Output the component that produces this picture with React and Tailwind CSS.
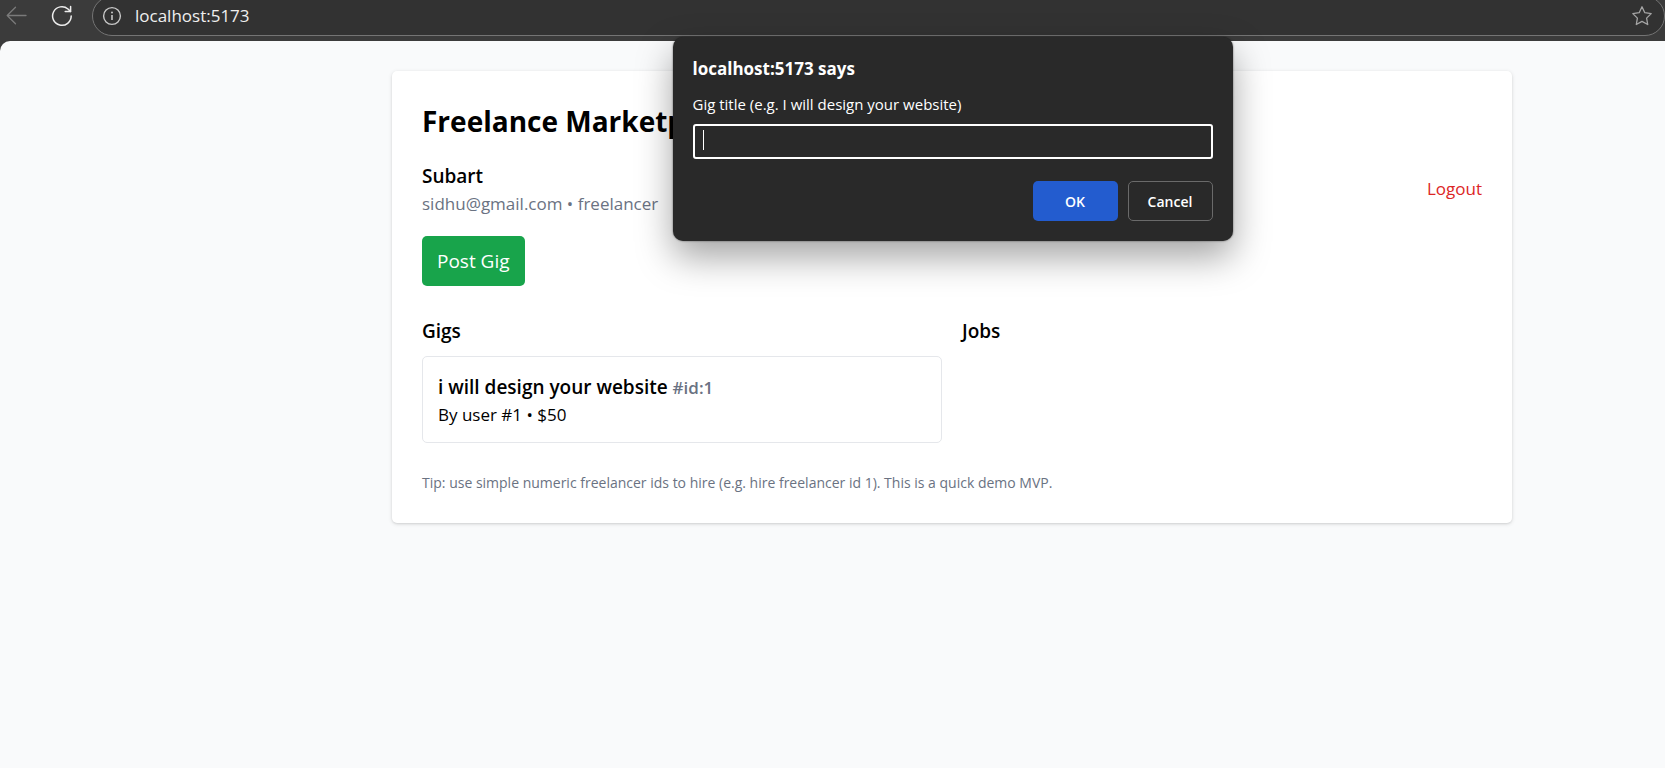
import { useState } from "react";

function BackIcon() {
  return (
    <svg width="22" height="20" viewBox="0 0 22 20" fill="none" stroke="currentColor" strokeWidth="1.3" strokeLinecap="round" strokeLinejoin="round">
      <path d="M20 10.5H1.2M9.5 2.2 1.2 10.5l8.3 8.3" />
    </svg>
  );
}

function ReloadIcon() {
  return (
    <svg width="22" height="22" viewBox="0 0 22 22" fill="none" stroke="currentColor" strokeWidth="1.5" strokeLinecap="round" strokeLinejoin="round">
      <path d="M20.2 11a9.3 9.3 0 1 1-3.2-7l2.4 2.4" />
      <path d="M19.6 1.4v5.2h-5.4" />
    </svg>
  );
}

function InfoIcon() {
  return (
    <svg width="20" height="20" viewBox="0 0 20 20" fill="none" stroke="currentColor" strokeWidth="1.4">
      <circle cx="10" cy="10" r="8.4" />
      <path d="M10 9v5" strokeWidth="1.6" />
      <circle cx="10" cy="6.4" r="1" fill="currentColor" stroke="none" />
    </svg>
  );
}

function StarIcon() {
  return (
    <svg width="22" height="22" viewBox="0 0 22 22" fill="none" stroke="currentColor" strokeWidth="1.3" strokeLinejoin="round">
      <path d="M11 1.8l2.8 5.9 6.4.9-4.6 4.5 1.1 6.4L11 16.4l-5.7 3.1 1.1-6.4L1.8 8.6l6.4-.9z" />
    </svg>
  );
}

function BrowserBar() {
  return (
    <header className="flex h-[41px] items-start bg-[#3b3b3b]">
      <button type="button" aria-label="Back" className="ml-1.5 mt-[5px] text-[#7a7a7a]">
        <BackIcon />
      </button>
      <button type="button" aria-label="Reload" className="ml-[23px] mt-[5px] text-[#ededed]">
        <ReloadIcon />
      </button>
      <div className="-mt-1 ml-[19px] flex h-10 flex-1 items-center rounded-full border border-[#747474] bg-[#323232] pl-[9px] pr-[11px]">
        <span className="text-[#c8c8c8]">
          <InfoIcon />
        </span>
        <input
          aria-label="Address"
          defaultValue="localhost:5173"
          className="ml-[13px] min-w-0 flex-1 bg-transparent text-[17px] leading-6 text-[#efefef] outline-none"
        />
        <button type="button" aria-label="Add to favorites" className="text-[#a5a5a5]">
          <StarIcon />
        </button>
      </div>
    </header>
  );
}

function PromptDialog() {
  const [title, setTitle] = useState("");
  return (
    <div className="pointer-events-none absolute inset-x-0 top-[37px] flex justify-center pl-60">
      <form
        role="dialog"
        aria-labelledby="prompt-origin"
        onSubmit={(e) => e.preventDefault()}
        className="pointer-events-auto w-[560px] rounded-[10px] bg-[#292929] p-5 text-white shadow-[0_16px_36px_rgba(0,0,0,0.36),0_0_2px_rgba(0,0,0,0.6)]"
      >
        <h2 id="prompt-origin" className="text-[17px] font-bold leading-6">
          localhost:5173 says
        </h2>
        <label htmlFor="gig-title" className="mt-[11px] block text-[15px] leading-6">
          Gig title (e.g. I will design your website)
        </label>
        <div className="relative mt-2">
          <input
            id="gig-title"
            value={title}
            onChange={(e) => setTitle(e.target.value)}
            className="block h-[35px] w-full rounded-[3px] border-2 border-white bg-transparent px-2 text-[15px] caret-transparent outline-none"
          />
          <span className="absolute left-2.5 top-1.5 h-5 w-px bg-white" />
        </div>
        <div className="mt-[22px] flex justify-end gap-2.5 text-[14px] font-semibold">
          <button type="submit" className="h-10 w-[85px] rounded-[5px] bg-[#235ccf]">
            OK
          </button>
          <button type="button" className="h-10 w-[85px] rounded-[5px] border border-[#6a6a6a]">
            Cancel
          </button>
        </div>
      </form>
    </div>
  );
}

function GigCard({ gig }) {
  return (
    <li className="rounded-[5px] border border-gray-200 p-[15px]">
      <h3 className="text-[19px] font-semibold leading-[30px]">
        {gig.title} <span className="text-[17px] leading-none text-gray-500">#id:{gig.id}</span>
      </h3>
      <p className="text-[17px] leading-[25px]">
        By user #{gig.user} • ${gig.price}
      </p>
    </li>
  );
}

const gigs = [{ id: 1, title: "i will design your website", user: 1, price: 50 }];

export default function App() {
  return (
    <div className="relative flex min-h-screen flex-col bg-[#3b3b3b] font-['Segoe_UI','Open_Sans',sans-serif]">
      <BrowserBar />
      <div className="flex-1 rounded-tl-[10px] bg-[#f9fafb] pl-[239px] pt-[30px]">
        <main className="mx-auto max-w-[1120px] rounded-[5px] bg-white p-[30px] text-black shadow-[0_1px_4px_rgba(0,0,0,0.12),0_1px_2px_rgba(0,0,0,0.08)]">
          <h1 className="text-[28px] font-bold leading-10">Freelance Marketplace</h1>
          <div className="mt-5 flex items-center justify-between">
            <div>
              <p className="text-[19px] font-semibold leading-[30px]">Subart</p>
              <p className="text-[17px] leading-[25px] text-gray-500">sidhu@gmail.com • freelancer</p>
            </div>
            <button type="button" className="text-[17px] leading-[25px] text-[#dc2626]">
              Logout
            </button>
          </div>
          <button type="button" className="mt-5 rounded-[5px] bg-[#18a44b] px-[15px] py-2.5 text-[19px] leading-[30px] text-white">
            Post Gig
          </button>
          <div className="mt-[30px] grid grid-cols-2 gap-5">
            <section>
              <h2 className="mb-2.5 text-[19px] font-semibold leading-[30px]">Gigs</h2>
              <ul>
                {gigs.map((gig) => (
                  <GigCard key={gig.id} gig={gig} />
                ))}
              </ul>
            </section>
            <section>
              <h2 className="mb-2.5 text-[19px] font-semibold leading-[30px]">Jobs</h2>
            </section>
          </div>
          <p className="mt-[30px] text-[14px] leading-5 text-gray-500">
            Tip: use simple numeric freelancer ids to hire (e.g. hire freelancer id 1). This is a quick demo MVP.
          </p>
        </main>
      </div>
      <PromptDialog />
    </div>
  );
}
